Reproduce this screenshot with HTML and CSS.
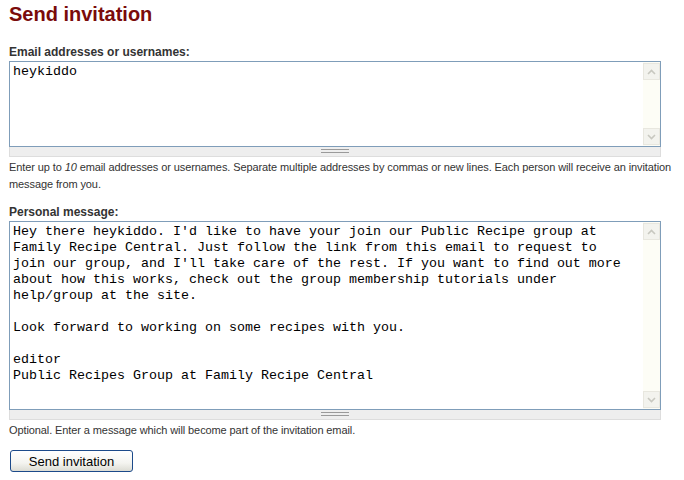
FILE: index.html
```html
<!DOCTYPE html>
<html lang="en">
<head>
    <meta charset="UTF-8">
    <title>Send invitation</title>
    <link rel="stylesheet" href="styles.css">
</head>
<body>
    <h1 class="page-title">Send invitation</h1>

    <form class="invite-form">
        <div class="form-item">
            <label for="edit-email">Email addresses or usernames:</label>
            <div class="textarea-box">
                <textarea id="edit-email" class="emails" rows="5">heykiddo</textarea>
                <div class="scrollbar">
                    <span class="sb-btn up"><svg width="9" height="6" viewBox="0 0 9 6"><path d="M1 5 L4.5 1.5 L8 5" fill="none" stroke="#c8c8c0" stroke-width="1.6"/></svg></span>
                    <span class="sb-track"></span>
                    <span class="sb-btn down"><svg width="9" height="6" viewBox="0 0 9 6"><path d="M1 1 L4.5 4.5 L8 1" fill="none" stroke="#c8c8c0" stroke-width="1.6"/></svg></span>
                </div>
            </div>
            <div class="grippie"></div>
            <div class="description">Enter up to <em>10</em> email addresses or usernames. Separate multiple addresses by commas or new lines. Each person will receive an invitation message from you.</div>
        </div>

        <div class="form-item last">
            <label for="edit-message">Personal message:</label>
            <div class="textarea-box">
                <textarea id="edit-message" class="message" rows="11">Hey there heykiddo. I'd like to have your join our Public Recipe group at
Family Recipe Central. Just follow the link from this email to request to
join our group, and I'll take care of the rest. If you want to find out more
about how this works, check out the group membership tutorials under
help/group at the site.

Look forward to working on some recipes with you.

editor
Public Recipes Group at Family Recipe Central</textarea>
                <div class="scrollbar">
                    <span class="sb-btn up"><svg width="9" height="6" viewBox="0 0 9 6"><path d="M1 5 L4.5 1.5 L8 5" fill="none" stroke="#c8c8c0" stroke-width="1.6"/></svg></span>
                    <span class="sb-track"></span>
                    <span class="sb-btn down"><svg width="9" height="6" viewBox="0 0 9 6"><path d="M1 1 L4.5 4.5 L8 1" fill="none" stroke="#c8c8c0" stroke-width="1.6"/></svg></span>
                </div>
            </div>
            <div class="grippie"></div>
            <div class="description">Optional. Enter a message which will become part of the invitation email.</div>
        </div>

        <button type="button" class="form-submit">Send invitation</button>
    </form>
</body>
</html>
```

FILE: styles.css
```css
body {
    margin: 0;
    padding: 0 0 0 9px;
    font-family: "Liberation Sans", Arial, sans-serif;
    color: #333;
    background: #fff;
}

.page-title {
    margin: 2px 0 0;
    font-size: 20px;
    line-height: 24px;
    font-weight: bold;
    color: #7a0b0b;
}

.invite-form {
    margin-top: 19px;
}

.form-item {
    margin-bottom: 12px;
}

.form-item.last {
    margin-bottom: 11px;
}

.form-item label {
    display: block;
    font-size: 12px;
    font-weight: bold;
    line-height: 15px;
    margin-bottom: 1px;
    color: #333;
}

.textarea-box {
    display: flex;
    width: 650px;
    border: 1px solid #7f9db9;
    background: #fff;
}

.textarea-box textarea {
    flex: 1;
    border: 0;
    margin: 0;
    padding: 2px 3px;
    resize: none;
    outline: none;
    overflow: hidden;
    font-family: "Liberation Mono", "Courier New", monospace;
    font-size: 13.33px;
    line-height: 16px;
    color: #000;
    background: #fff;
}

.emails {
    height: 80px;
}

.message {
    height: 183px;
}

.scrollbar {
    width: 17px;
    display: flex;
    flex-direction: column;
    background: #fdfdf6;
    padding: 1px 0;
}

.sb-btn {
    width: 15px;
    height: 15px;
    border: 1px solid #e8e7df;
    background: #f3f3ee;
    display: flex;
    align-items: center;
    justify-content: center;
}

.sb-track {
    flex: 1;
}

/* resize handle: two short lines in the middle */
.grippie {
    width: 650px;
    height: 9px;
    border: 1px solid #ddd;
    border-top: 0;
    background: #eee linear-gradient(#9a9a9a, #9a9a9a) no-repeat center 2px / 28px 1px;
    position: relative;
}

.grippie::after {
    content: "";
    position: absolute;
    left: 311px;
    top: 5px;
    width: 28px;
    height: 1px;
    background: #9a9a9a;
}

.description {
    font-size: 11px;
    line-height: 17px;
    letter-spacing: -0.1px;
    margin-top: 2px;
    color: #333;
}

.form-submit {
    margin: 0 0 0 1px;
    width: 123px;
    height: 22px;
    border: 1px solid #1c4a8a;
    border-radius: 3px;
    background: linear-gradient(#ffffff, #f4f4f0 60%, #dcdcd4);
    font-family: "Liberation Sans", Arial, sans-serif;
    font-size: 13px;
    color: #000;
    padding: 0;
}
```
